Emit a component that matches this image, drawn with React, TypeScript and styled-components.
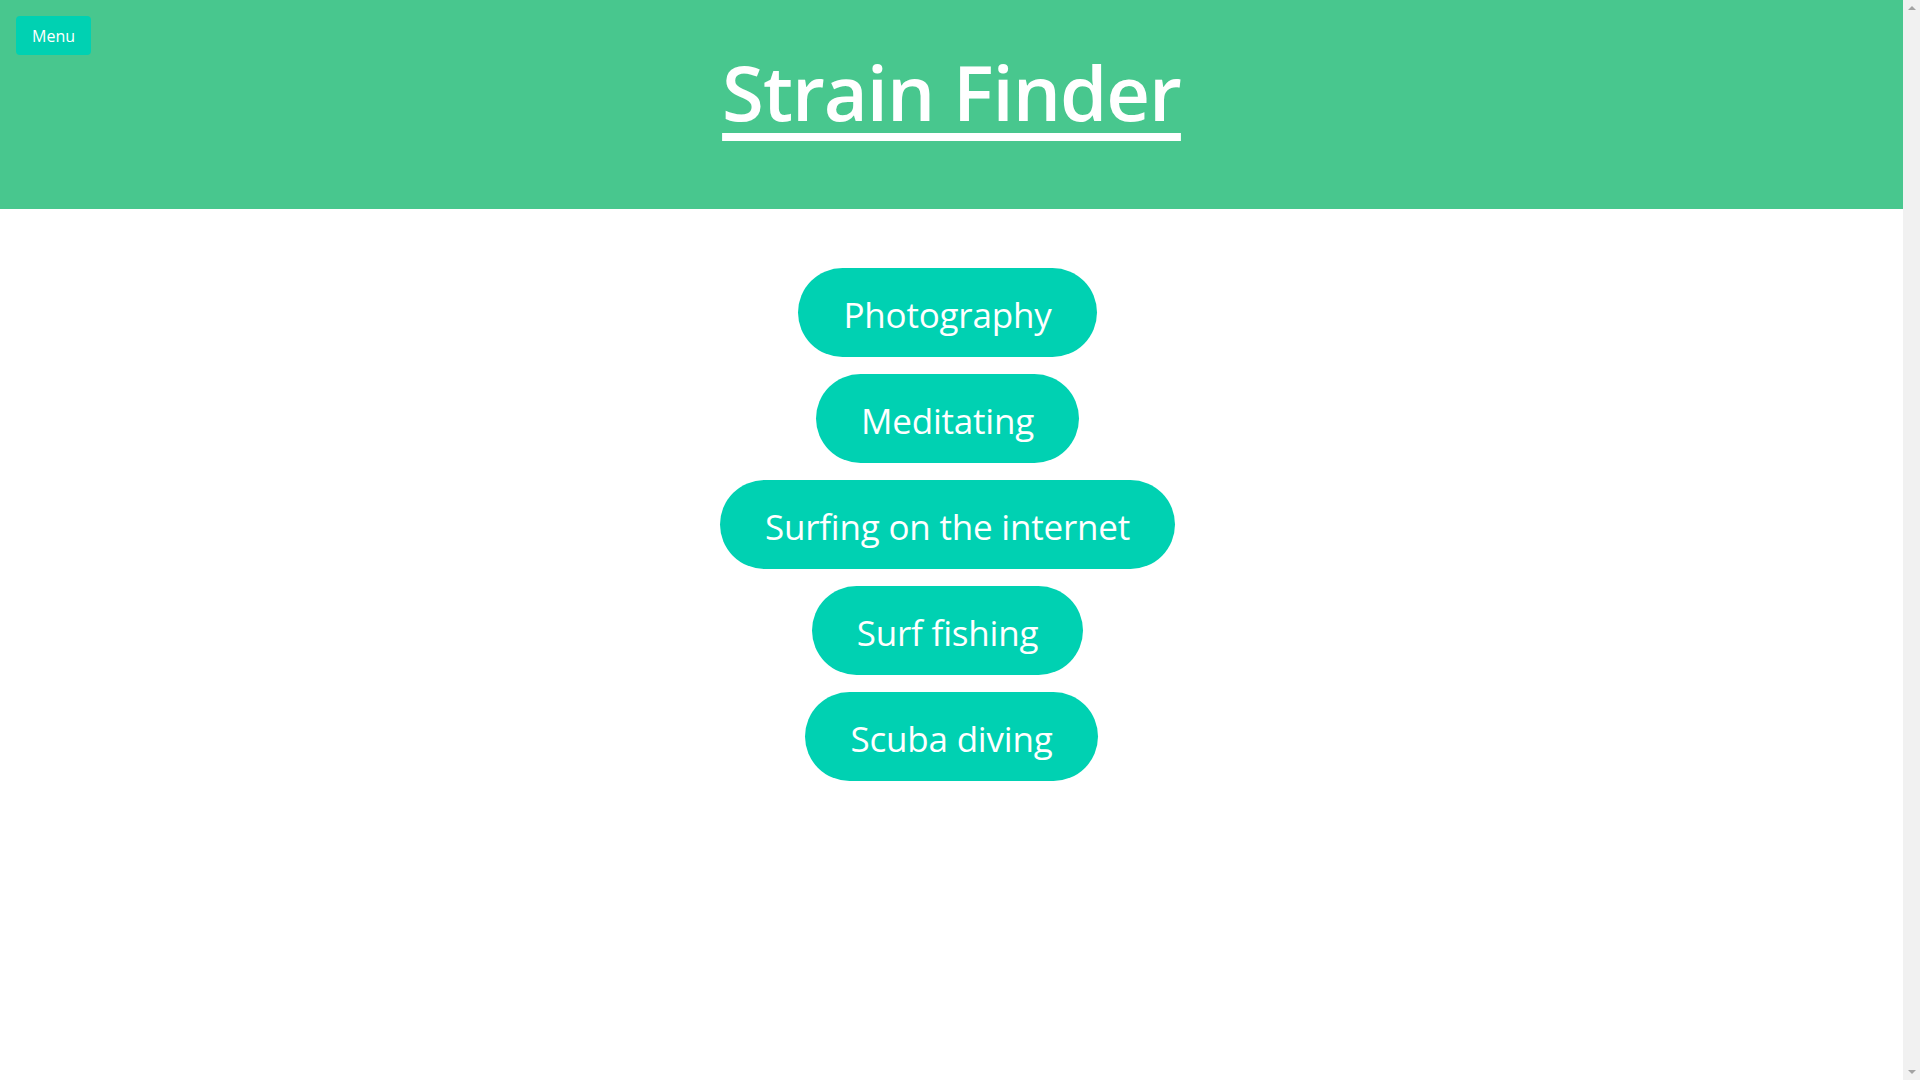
import { createGlobalStyle } from 'styled-components';
import styled from 'styled-components';

const GlobalStyle = createGlobalStyle`
  body {
    margin: 0;
    background: #ffffff;
    font-family: 'Open Sans', 'Noto Sans', sans-serif;
    color: #4a4a4a;
  }
`;

// the reference was shot with a classic scrollbar on the right
const Frame = styled.div`
  display: flex;
  min-height: 1080px;
`;

const Page = styled.div`
  flex: 1;
`;

const ScrollTrack = styled.div`
  flex: 0 0 17px;
  display: flex;
  flex-direction: column;
  justify-content: space-between;
  align-items: center;
  padding: 6px 0;
  box-sizing: border-box;
  background: #f1f1f1;
  height: 1080px;
`;

const Arrow = styled.div<{ down?: boolean }>`
  width: 0;
  height: 0;
  border-left: 4px solid transparent;
  border-right: 4px solid transparent;
  ${(props) => (props.down ? 'border-top: 4px solid #a3a3a3;' : 'border-bottom: 4px solid #a3a3a3;')}
`;

const Hero = styled.header`
  display: grid;
  grid-template-columns: 1fr auto 1fr;
  align-items: start;
  height: 209px;
  box-sizing: border-box;
  padding: 16px;
  background: #48c78e;
`;

const MenuButton = styled.button`
  justify-self: start;
  height: 39px;
  padding: 0 16px;
  border: none;
  border-radius: 4px;
  background: #00d1b2;
  color: #ffffff;
  font-family: inherit;
  font-size: 16px;
  cursor: pointer;
`;

const Title = styled.h1`
  margin: 33px 0 0;
  font-size: 76px;
  font-weight: 600;
  line-height: 1.125;
  letter-spacing: -1px;
  color: #ffffff;
  text-decoration: underline;
  text-decoration-thickness: 8px;
  text-underline-offset: 12px;
  cursor: pointer;
`;

const Choices = styled.section`
  display: flex;
  flex-direction: column;
  align-items: center;
  gap: 17px;
  padding-top: 59px;
`;

const Choice = styled.button<{ last?: boolean }>`
  height: 89px;
  padding: 3px 45px 0;
  margin-right: ${(props) => (props.last ? '0' : '8px')};
  border: none;
  border-radius: 9999px;
  background: #00d1b2;
  color: #ffffff;
  font-family: inherit;
  font-size: 35px;
  letter-spacing: -0.2px;
  white-space: nowrap;
  cursor: pointer;
`;

const hobbies = ['Photography', 'Meditating', 'Surfing on the internet', 'Surf fishing', 'Scuba diving'];

const App = () => {
  return (
    <Frame>
      <GlobalStyle />
      <Page>
        <Hero>
          <MenuButton>Menu</MenuButton>
          <Title>Strain Finder</Title>
          <span />
        </Hero>
        <Choices>
          {hobbies.map((hobby, i) => (
            <Choice key={hobby} last={i === hobbies.length - 1}>
              {hobby}
            </Choice>
          ))}
        </Choices>
      </Page>
      <ScrollTrack>
        <Arrow />
        <Arrow down />
      </ScrollTrack>
    </Frame>
  );
};

export default App;
